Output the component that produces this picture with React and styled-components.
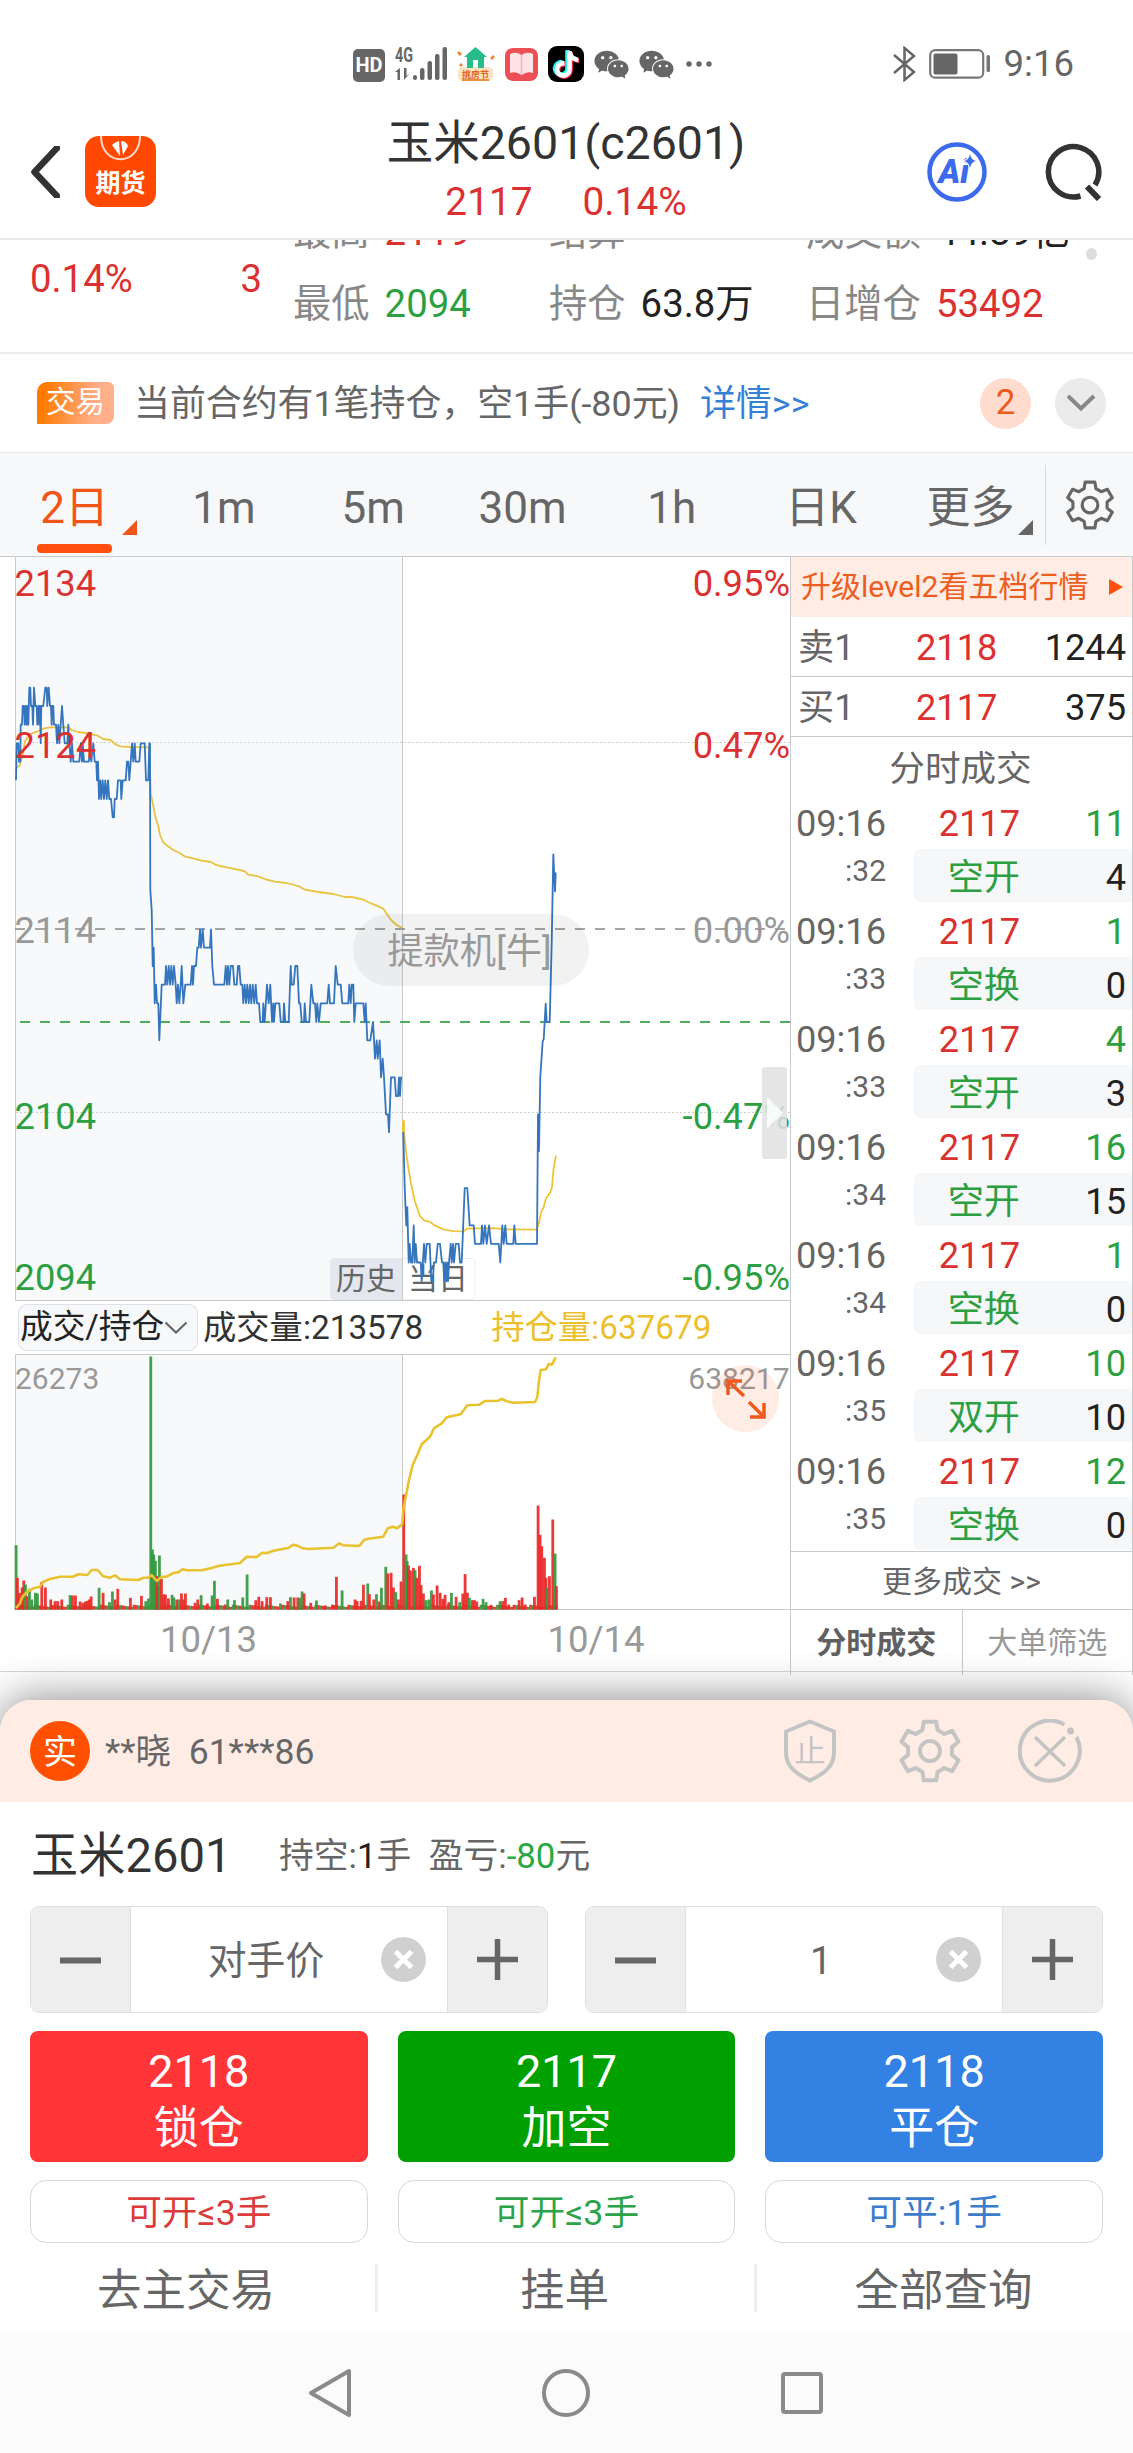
import React from 'react'
import styled, { createGlobalStyle } from 'styled-components'
import { FaTiktok } from 'react-icons/fa'
import { AiFillWechat } from 'react-icons/ai'

const RED = '#db3131'
const GREEN = '#2d9f43'
const ORANGE = '#ff5010'
const LINE = '#c9cacc'
const CHART_FONT = 'Roboto, "Noto Sans CJK SC", sans-serif'

const GlobalStyle = createGlobalStyle`
  * { box-sizing: border-box; }
  body {
    margin: 0;
    background: #fff;
    font-family: Roboto, "Noto Sans CJK SC", sans-serif;
    line-height: 1.2;
    color: #666;
  }
  svg { display: block; flex: none; }
`

const Page = styled.div`
  width: 1133px;
  height: 2453px;
  overflow: hidden;
  display: flex;
  flex-direction: column;
  background: #fff;
`

/* ---------- status bar ---------- */

const StatusBar = styled.div`
  height: 96px;
  padding: 32px 59px 0 353px;
  display: flex;
  align-items: center;
  gap: 10px;
  color: #666;
`

const HdBadge = styled.span`
  width: 32px;
  height: 33px;
  border-radius: 5px;
  background: #666;
  color: #fff;
  font-size: 20px;
  font-weight: 700;
  line-height: 33px;
  text-align: center;
  margin-top: 2px;
`

const TiktokBadge = styled.span`
  width: 36px;
  height: 36px;
  border-radius: 9px;
  background: #000;
  display: grid;
  place-items: center;
  svg { filter: drop-shadow(-1.5px -1px 0 #25f4ee) drop-shadow(1.5px 1px 0 #fe2c55); }
`

const Chats = styled.span`
  display: flex;
  gap: 6px;
  margin-left: -2px;
`

const StatusRight = styled.div`
  margin-left: auto;
  display: flex;
  align-items: center;
  gap: 13px;
  font-size: 36.5px;
  line-height: 44px;
`

/* ---------- header ---------- */

const Header = styled.header`
  height: 144px;
  padding: 9px 31px 0 30px;
  display: grid;
  grid-template-columns: 55px 1fr auto 1fr 57px;
  align-items: center;
  border-bottom: 2px solid #e9e9e9;
`

const AppLogo = styled.div`
  width: 71px;
  height: 71px;
`

const TitleBox = styled.div`
  text-align: center;
  padding: 3px 0 0 2px;
`

const Title = styled.div`
  font-size: 46.5px;
  line-height: 58px;
  color: #333;
`

const SubTitle = styled.div`
  font-size: 38.8px;
  line-height: 60px;
  color: ${RED};
  display: flex;
  justify-content: center;
  gap: 50px;
`

const HeaderRight = styled.div`
  display: flex;
  justify-content: flex-end;
  padding-right: 58px;
`

/* ---------- quote summary ---------- */

const Quote = styled.section`
  height: 112px;
  overflow: hidden;
  display: flex;
  font-size: 38.3px;
  position: relative;
`

const QuoteLeft = styled.div`
  width: 293px;
  padding: 14px 31px 0 30px;
  display: flex;
  justify-content: space-between;
  line-height: 50px;
  color: ${RED};
`

const QuoteGrid = styled.div`
  margin-top: -44px;
  display: grid;
  grid-template-columns: 256px 257px 300px;
  grid-template-rows: 72px 72px;
  line-height: 72px;
`

const QuoteItem = styled.div`
  display: flex;
  gap: 15px;
  color: #888;
  white-space: nowrap;
`

const QuoteValue = styled.span`
  color: ${p => p.$color};
`

const PageDot = styled.i`
  position: absolute;
  right: 36px;
  top: 8px;
  width: 11px;
  height: 12px;
  border-radius: 50%;
  background: #ddd;
`

/* ---------- position notice ---------- */

const Notice = styled.section`
  height: 101px;
  padding: 0 27px 0 37px;
  display: flex;
  align-items: center;
  border-top: 2px solid #ececec;
  border-bottom: 1px solid #e9e9e9;
  font-size: 35.9px;
  line-height: 50px;
`

const NoticeText = styled.span`
  padding-top: 2px;
`

const TradeTag = styled.span`
  width: 77px;
  height: 42px;
  border-radius: 10px 6px 8px 0;
  background: linear-gradient(100deg, #ff7a00 10%, #ffae8a 75%);
  color: #fff;
  font-size: 29.5px;
  line-height: 41px;
  text-align: center;
  margin-right: 20px;
`

const Detail = styled.a`
  color: #3480d8;
  margin-left: 20px;
  padding-top: 2px;
`

const RoundBadge = styled.span`
  width: 51px;
  height: 51px;
  border-radius: 50%;
  display: grid;
  place-items: center;
  margin-left: ${p => p.$push || '24px'};
  background: ${p => p.$bg};
  color: #ee5a1c;
  font-size: 35px;
`

/* ---------- period tabs ---------- */

const TabBar = styled.nav`
  height: 104px;
  display: flex;
  background: #f7f8fa;
  border-bottom: 1.5px solid ${LINE};
`

const Tab = styled.div`
  width: 149.3px;
  display: flex;
  flex-direction: column;
  align-items: center;
  padding-top: 29px;
  position: relative;
  font-size: 44px;
  line-height: 52px;
  color: ${p => (p.$active ? '#f0561a' : '#666')};
  &::before {
    content: "";
    display: ${p => (p.$active ? 'block' : 'none')};
    order: 2;
    width: 75px;
    height: 9px;
    margin-top: 10px;
    border-radius: 4px;
    background: ${ORANGE};
  }
`

const TabCorner = styled.i`
  position: absolute;
  right: 12px;
  top: 67px;
  border-bottom: 15px solid currentColor;
  border-left: 15px solid transparent;
`

const TabSettings = styled.div`
  height: 80px;
  margin-top: 12px;
  flex: 1;
  border-left: 1px solid #d8d8d8;
  display: grid;
  place-items: center;
`

/* ---------- chart ---------- */

const Market = styled.main`
  height: 1115px;
  display: grid;
  grid-template-columns: 790px 343px;
  border-bottom: 1.5px solid #d6d6d6;
`

const ChartColumn = styled.div`
  position: relative;
`

const InfoBar = styled.div`
  height: 53px;
  display: flex;
  align-items: center;
  padding-left: 18px;
  font-size: 33.3px;
  color: #333;
`

const Select = styled.div`
  width: 180px;
  height: 47px;
  margin-right: 5px;
  padding-left: 1px;
  display: flex;
  align-items: center;
  border: 1px solid #dfe1e6;
  border-radius: 9px;
  background: #f7f8fa;
  color: #222;
  font-size: 32.7px;
`

const OpenInterest = styled.span`
  color: #ecc02c;
  margin-left: 68px;
`

const Dates = styled.div`
  margin-left: 15px;
  display: grid;
  grid-template-columns: 387px 388px;
  text-align: center;
  font-size: 36.5px;
  line-height: 60px;
  color: #999;
`

const Watermark = styled.div`
  position: absolute;
  left: 353px;
  top: 357px;
  width: 236px;
  height: 72px;
  padding-right: 3px;
  border-radius: 36px;
  background: rgba(0, 0, 0, 0.05);
  color: #999;
  font-size: 36.3px;
  line-height: 75px;
  text-align: center;
`

const Handle = styled.div`
  position: absolute;
  left: 762px;
  top: 510px;
  width: 25px;
  height: 92px;
  border-radius: 3px;
  background: rgba(224, 224, 224, 0.85);
  display: grid;
  place-items: center;
`

const Expand = styled.div`
  position: absolute;
  left: 712px;
  top: 808px;
  width: 67px;
  height: 67px;
  border-radius: 50%;
  background: rgba(255, 80, 10, 0.11);
  display: grid;
  place-items: center;
`

/* ---------- order book ---------- */

const Side = styled.aside`
  border-left: 1px solid ${LINE};
  border-right: 1.5px solid ${LINE};
  font-size: 36.2px;
  display: flex;
  flex-direction: column;
`

const Upgrade = styled.div`
  height: 60px;
  padding: 0 9px 0 10px;
  display: flex;
  align-items: center;
  justify-content: space-between;
  background: #ffece4;
  color: #ee5d20;
  font-size: 30px;
`

const BookRow = styled.div`
  height: 60px;
  padding: 2px 6px 0 7px;
  display: grid;
  grid-template-columns: 118px 1fr auto;
  align-items: center;
  border-bottom: 1px solid ${LINE};
`

const Num = styled.span`
  color: ${p => p.$color || '#222'};
  text-align: right;
`

const LeftNum = styled(Num)`
  text-align: left;
`

const SideTitle = styled.div`
  height: 58px;
  line-height: 64px;
  padding-right: 2px;
  text-align: center;
  font-size: 35.6px;
`

const Trade = styled.div`
  height: 108px;
  display: grid;
  grid-template-columns: 95px 28px 1fr;
  grid-template-rows: 54px 54px;
`

const Time = styled.span`
  text-align: right;
  line-height: 58px;
`

const Second = styled.span`
  text-align: right;
  font-size: 30px;
  line-height: 43px;
`

const TradeCells = styled.div`
  grid-column: 3;
  height: 53px;
  padding-right: 6px;
  display: grid;
  grid-template-columns: 106px 1fr;
  line-height: 58px;
  border-radius: 6px 0 0 6px;
  background: ${p => (p.$shade ? '#f6f7f9' : 'transparent')};
`

const More = styled.div`
  height: 59px;
  line-height: 60px;
  border-top: 1px solid ${LINE};
  border-bottom: 1px solid ${LINE};
  text-align: center;
  font-size: 30px;
`

const SideTabs = styled.div`
  flex: 1;
  display: grid;
  grid-template-columns: 1fr 1fr;
`

const SideTab = styled.div`
  text-align: center;
  font-size: 30px;
  line-height: 65px;
  color: ${p => (p.$active ? '#606060' : '#999')};
  font-weight: ${p => (p.$active ? 700 : 400)};
  & + & { border-left: 1px solid ${LINE}; }
`

/* ---------- order sheet ---------- */

const Sheet = styled.section`
  margin-top: 28px;
  height: 633px;
  border-radius: 32px 32px 0 0;
  overflow: visible;
  background: #fff;
  position: relative;
  box-shadow: 0 -2px 44px rgba(0, 0, 0, 0.45);
`

const Account = styled.div`
  height: 102px;
  padding: 0 51px 0 30px;
  border-radius: 32px 32px 0 0;
  display: flex;
  align-items: center;
  background: #ffece5;
  font-size: 35.5px;
`

const AccountName = styled.span`
  padding-top: 3px;
`

const AccountBadge = styled.span`
  width: 60px;
  height: 60px;
  border-radius: 50%;
  background: #ff5000;
  color: #fff;
  font-size: 34px;
  line-height: 62px;
  text-align: center;
  margin-right: 15px;
`

const AccountIcons = styled.div`
  margin-left: auto;
  display: flex;
  align-items: center;
  gap: 56px;
`

const Contract = styled.div`
  height: 104px;
  padding: 5px 31px 0;
  display: flex;
  align-items: center;
  font-size: 34.8px;
`

const ContractName = styled.span`
  font-size: 47.2px;
  color: #333;
  width: 248px;
`

const Colored = styled.span`
  color: ${p => p.$color};
`

const Steppers = styled.div`
  display: flex;
  gap: 37px;
  padding: 0 30px;
`

const Stepper = styled.div`
  flex: 1;
  height: 107px;
  display: grid;
  grid-template-columns: 99px 1fr 99px;
  border: 1.5px solid #dedede;
  border-radius: 9px;
  overflow: hidden;
`

const StepButton = styled.div`
  background: #eee;
  display: grid;
  place-items: center;
`

const StepValue = styled.div`
  display: flex;
  align-items: center;
  padding: 0 21px 0 20px;
  border: solid #e0e0e0;
  border-width: 0 1px;
  font-size: 38.8px;
`

const StepText = styled.span`
  flex: 1;
  text-align: center;
  padding-top: 4px;
`

const Columns = styled.div`
  display: grid;
  grid-template-columns: repeat(3, 1fr);
  gap: 30px;
  padding: 0 30px;
  margin-top: ${p => p.$top};
`

const Action = styled.div`
  height: 131px;
  border-radius: 8px;
  padding-top: 12px;
  background: ${p => p.$bg};
  color: #fff;
  text-align: center;
  font-size: 45px;
  line-height: 57px;
`

const Limit = styled.div`
  height: 63px;
  border: 1.5px solid #d9d9d9;
  border-radius: 16px;
  color: ${p => p.$color};
  text-align: center;
  font-size: 35.7px;
  line-height: 65px;
`

const Links = styled.div`
  margin-top: 21px;
  display: grid;
  grid-template-columns: 375px 379px 379px;
`

const LinkItem = styled.div`
  height: 48px;
  line-height: 55px;
  text-align: center;
  font-size: 44.5px;
  padding-right: 3px;
  & + & { border-left: 3px solid #eee; }
`

const NavBar = styled.div`
  flex: 1;
  position: relative;
  display: flex;
  align-items: center;
  gap: 180px;
  padding-left: 298px;
  background: #fbfbfb;
`

/* ---------- data ---------- */

const periods = ['2日', '1m', '5m', '30m', '1h', '日K', '更多']

const trades = [
  ['32', 11, '空开', 4],
  ['33', 1, '空换', 0],
  ['33', 4, '空开', 3],
  ['34', 16, '空开', 15],
  ['34', 1, '空换', 0],
  ['35', 10, '双开', 10],
  ['35', 12, '空换', 0],
]

// price traces: x in thirds of a pixel, then the y of the tick
const priceMorning = '48,721 50,610 55,610 57,665 61,665 62,554 66,554 68,498 72,498 74,554 77,498 80,554 82,498 85,554 88,443 91,443 93,498 97,498 99,554 102,443 106,498 110,498 112,554 116,498 118,554 120,498 122,610 124,498 130,498 136,443 140,443 142,498 146,443 150,498 153,498 155,554 157,498 160,498 162,554 168,554 171,610 175,554 178,610 182,554 186,498 190,554 194,610 202,610 205,554 208,610 212,665 216,610 220,665 238,665 242,610 246,665 248,610 252,665 266,665 270,640 274,665 280,610 284,665 289,665 291,721 294,665 297,777 301,721 304,777 308,721 312,777 316,721 320,777 324,721 328,777 333,777 338,832 342,832 344,777 350,777 354,721 362,721 364,777 368,721 377,721 381,665 385,665 388,721 392,665 396,610 400,665 404,610 407,665 418,665 422,610 434,610 438,721 445,721 448,610 450,610 451,1050 455,1110'
const priceAfternoon = '455,90 458,258 461,203 464,370 468,314 471,370 475,370 478,481 485,314 495,314 498,258 502,314 506,258 510,314 514,258 518,314 522,258 527,314 530,370 534,314 538,370 542,314 545,258 550,370 556,314 572,314 576,258 579,314 582,258 588,258 592,203 596,203 600,148 603,203 608,148 612,203 630,203 633,148 637,258 642,314 673,314 677,258 681,314 684,258 688,314 692,258 699,258 703,314 710,314 714,258 718,258 722,314 727,314 730,370 734,314 738,370 742,314 746,370 750,314 754,370 758,314 763,370 767,314 771,370 777,370 781,426 788,426 790,370 794,426 801,314 806,370 811,314 816,426 820,370 822,426 826,370 838,370 842,426 850,426 852,370 856,426 866,426 872,258 875,314 881,314 886,258 892,258 897,370 901,370 905,426 912,426 914,370 918,426 928,426 934,314 940,370 945,370 949,426 952,370 957,426 962,370 982,370 986,314 990,370 1002,370 1007,258 1013,314 1022,314 1027,370 1045,370 1048,314 1052,370 1055,314 1060,314 1063,426 1067,370 1090,370 1094,426 1097,370 1102,481 1111,481 1119,426 1125,536 1130,481 1133,536 1139,481 1143,592 1148,536 1152,592 1158,703 1164,703 1167,757 1173,592 1184,592 1188,648 1194,648 1197,592 1200,648 1203,592 1206,592'
const priceToday = '70,930 74,1085 79,1191 82,1140 86,1295 89,1243 93,1295 97,1295 101,1191 104,1295 107,1243 111,1295 122,1295 125,1347 132,1243 136,1295 140,1243 149,1243 154,1347 158,1347 162,1295 168,1295 173,1243 180,1243 186,1295 190,1295 193,1347 196,1295 199,1347 202,1295 204,1347 207,1295 212,1243 215,1295 219,1243 222,1295 227,1243 236,1243 240,1295 245,1295 254,1087 262,1087 269,1191 281,1191 285,1243 303,1243 306,1191 310,1243 315,1191 320,1243 327,1191 333,1243 356,1243 361,1295 367,1191 371,1243 376,1191 380,1243 400,1243 403,1191 407,1243 471,1243 474,880 477,983 481,775 488,675 491,670 497,570 500,622 509,622 515,400 520,152 525,256 527,205 529,205'
const averageHistory = '51,682 58,678 66,655 70,640 74,605 84,590 95,580 110,575 130,566 150,562 205,562 215,570 235,576 265,580 290,586 310,597 332,600 345,612 360,619 390,621 448,622 452,760 458,790 466,830 475,858 480,885 490,907 500,916 520,930 540,940 556,950 580,955 605,962 633,966 648,975 680,982 710,988 733,993 745,1004 770,1008 800,1019 825,1025 860,1029 895,1038 915,1049 955,1056 1000,1062 1035,1071 1055,1071 1090,1079 1115,1091 1150,1106 1160,1122 1175,1142 1190,1155 1206,1164'
const averageToday = '68,930 70,897 72,900 72,930 80,1000 92,1070 105,1125 120,1165 132,1177 150,1181 165,1192 190,1202 220,1207 250,1208 262,1200 340,1199 380,1202 470,1203 478,1180 484,1152 490,1143 498,1115 510,1100 516,1085 520,1040 524,1015 528,996'
const openInterest = '48,985 60,970 65,955 72,945 85,933 100,925 120,920 130,905 150,897 180,890 218,890 235,883 262,885 275,870 293,870 310,889 330,893 345,886 360,898 415,900 430,893 445,893 455,885 470,903 485,890 500,890 518,880 535,877 548,868 560,871 605,871 635,864 655,858 720,849 740,830 770,831 787,818 800,820 820,812 865,804 880,794 895,798 905,804 925,807 1000,803 1018,790 1030,796 1078,798 1092,780 1105,776 1150,770 1163,745 1178,740 1192,745 1207,732 1210,690 1225,610 1238,555 1255,518 1265,493 1290,470 1302,445 1325,430 1340,412 1360,407 1382,403 1402,376 1438,374 1455,363 1495,362 1505,357 1520,364 1540,368 1605,366 1612,352 1616,310 1622,270 1638,268 1646,252 1656,254 1667,232'

const volumes = 'g48:193 r52:95 r58:50 r66:66 r71:87 g76:75 r82:40 g88:62 g95:30 g106:50 g112:48 r125:83 r136:66 r152:30 r165:25 r173:25 r185:30 g210:43 r217:42 r226:42 r240:24 r248:20 r256:24 r262:26 r268:30 r273:39 g297:65 r309:50 g328:22 g337:54 r345:30 r353:62 r391:35 r424:41 g437:25 g445:33 g457:180 g461:165 g466:146 r470:100 r474:70 g478:162 r484:92 g452:759 r490:45 r496:45 r505:33 g516:44 g521:36 r530:30 g538:30 r544:48 r550:30 r556:48 r585:20 r593:30 g603:43 r622:18 g636:42 g643:86 r652:32 r675:15 g683:30 g703:28 g728:36 g741:105 r767:28 r776:38 r786:25 r800:37 r811:37 g841:18 r863:25 g871:37 r882:36 r893:36 g899:35 g906:54 r912:48 r932:20 g949:27 r975:12 r998:14 r1009:98 g1026:57 r1065:30 r1071:25 r1083:26 r1090:74 g1103:78 r1108:46 r1121:30 g1129:46 r1137:24 g1144:65 g1157:128 r1163:108 r1173:110 r1180:66 g1187:52 r1195:30 r1203:84 r1211:345 g1218:165 g1221:145 r1225:132 r1231:117 r1240:125 g1245:118 r1250:95 r1258:131 r1263:73 r1270:48 g1277:28 g1286:30 g1294:57 r1300:45 r1311:72 r1320:50 r1328:32 r1335:44 r1346:22 g1354:50 r1368:38 g1379:22 r1388:48 r1395:106 r1402:50 g1408:35 r1417:28 r1423:28 r1430:24 g1449:32 g1458:22 r1473:14 g1500:25 r1508:25 r1516:35 r1526:15 r1557:28 r1566:36 r1575:15 r1603:38 r1614:312 r1620:224 r1625:190 r1633:155 r1638:95 g1641:65 r1648:100 r1658:270 g1665:168 r1669:70'
  .split(' ')
  .map(v => {
    const [x, h] = v.slice(1).split(':')
    return { up: v[0] === 'r', x: x / 3, h: h / 3 }
  })

// quiet minutes between the spikes
const quiet = Array.from({ length: 230 }, (_, i) => ({
  up: (i * 7) % 5 < 3,
  x: 16 + i * 2.36,
  h: 2.6 + ((i * 13) % 7) * 0.35,
}))

const points = (data, x0, y0, ky = 3) =>
  data
    .split(' ')
    .map(p => {
      const [x, y] = p.split(',')
      return `${(x0 + x / 3).toFixed(1)},${(y0 + y / ky).toFixed(1)}`
    })
    .join(' ')

const gearPath = (c, r) => {
  const at = (deg, k) => {
    const a = (deg * Math.PI) / 180
    return `${(c + Math.cos(a) * r * k).toFixed(1)} ${(c + Math.sin(a) * r * k).toFixed(1)}`
  }
  let d = ''
  for (let i = 0; i < 6; i++) {
    const a = i * 60 - 90
    d += `${i ? 'L' : 'M'}${at(a - 20, 0.74)} L${at(a - 12, 1)} L${at(a + 12, 1)} L${at(a + 20, 0.74)} `
  }
  return d + 'Z'
}

/* ---------- icons ---------- */

const Gear = ({ size, color, width }) => (
  <svg width={size} height={size} viewBox="0 0 64 64" fill="none" stroke={color} strokeWidth={width} strokeLinejoin="round">
    <path d={gearPath(32, 30)} />
    <circle cx="32" cy="32" r="10" />
  </svg>
)

const Signal = () => (
  <svg width="52" height="36" viewBox="0 0 52 36" fill="#666">
    <text x="0" y="16" fontSize="20" fontWeight="700" textLength="18" lengthAdjust="spacingAndGlyphs" fontFamily="Roboto, sans-serif">4G</text>
    <path d="M0 26 L5 22 V34 H2.500 V26Z M9 22 H11.500 V30 L15 27 L9 34Z" />
    <rect x="18" y="29" width="4" height="5" rx="2" />
    <rect x="25" y="22" width="4.500" height="12" rx="2" />
    <rect x="32.500" y="15" width="4.500" height="19" rx="2" />
    <rect x="40" y="8" width="4.500" height="26" rx="2" />
    <rect x="47.500" y="1" width="4.500" height="33" rx="2" />
  </svg>
)

const HouseApp = () => (
  <svg width="38" height="38" viewBox="0 0 38 38">
    <rect x="1" y="22" width="35" height="14" rx="5" fill="#fbe3c2" />
    <path d="M5 35 H32" stroke="#e9903c" strokeWidth="2" />
    <path d="M18.500 2 L30 12 H27 V23 H21 V15 H16 V23 H10 V12 H7Z" fill="#27bd8a" />
    <path d="M1 7 L4 10 M34 14 L37 11 M3 19 L5 21" stroke="#ee8a33" strokeWidth="3" />
    <text x="18.500" y="33" textAnchor="middle" fontSize="9" fontWeight="700" fill="#e2641e" fontFamily={CHART_FONT}>挑房节</text>
  </svg>
)

const BookApp = () => (
  <svg width="33" height="33" viewBox="0 0 33 33">
    <rect width="33" height="33" rx="8" fill="#ec4f55" />
    <path d="M5 6 Q11 3 16.500 7 Q22 3 28 6 V25 Q22 23 16.500 27 Q11 23 5 25Z" fill="#ffe3e6" />
    <path d="M16.500 7 V27" stroke="#f5b1b8" strokeWidth="1.500" />
  </svg>
)

const Battery = () => (
  <svg width="62" height="30" viewBox="0 0 62 30">
    <rect x="1.200" y="1.200" width="53" height="27.500" rx="5" fill="none" stroke="#777" strokeWidth="2.200" />
    <rect x="4.500" y="4.500" width="24" height="21" rx="2" fill="#666" />
    <rect x="57.500" y="6" width="3.500" height="17" rx="1.500" fill="#777" />
  </svg>
)

const PriceChart = () => (
  <svg width="790" height="744" viewBox="0 0 790 744" fontFamily={CHART_FONT} fontSize="36.300">
    <rect x="15.500" y="0" width="387" height="743" fill="#f7f9fa" />
    <path d="M15.500 0 V743.500 H790 M402.500 0 V743" fill="none" stroke={LINE} />
    <path d="M16 185.500 H790 M16 555.500 H790" stroke="#cfcfcf" strokeDasharray="2 2" />
    <path d="M335 701 H402 V743 H335 Q330 743 330 738 V706 Q330 701 335 701Z" fill="#e4e7ee" />
    <path d="M403 701.500 H470 Q475 701.500 475 706 V738 Q475 742.500 470 742.500 H403" fill="#fff" stroke="#ececec" />
    <g fontSize="30" fill="#666">
      <text x="336" y="732">历史</text>
      <text x="408" y="732">当日</text>
    </g>
    <path d="M15 372 H790" stroke="#888" strokeWidth="1.700" strokeDasharray="10 10" />
    <path d="M20 465 H790" stroke="#4fae58" strokeWidth="2" strokeDasharray="10 10" />
    <g fill="none" strokeWidth="1.800" strokeLinejoin="round">
      <polyline points={points(averageHistory, 0, -17)} stroke="#e8c440" />
      <polyline points={points(averageToday, 380, 243, 2.8)} stroke="#ecc437" />
      <polyline points={points(priceMorning, 0, -17)} stroke="#3575bd" />
      <polyline points={points(priceAfternoon, 0, 323)} stroke="#3575bd" />
      <polyline points={points(priceToday, 380, 243, 2.8)} stroke="#3575bd" />
    </g>
    <g fill={RED}>
      <text x="14.500" y="39">2134</text>
      <text x="14.500" y="201">2124</text>
      <text x="790" y="39" textAnchor="end">0.95%</text>
      <text x="790" y="201" textAnchor="end">0.47%</text>
    </g>
    <g fill={GREEN}>
      <text x="14.500" y="572">2104</text>
      <text x="14.500" y="733">2094</text>
      <text x="790" y="572" textAnchor="end">-0.47%</text>
      <text x="790" y="733" textAnchor="end">-0.95%</text>
    </g>
    <g fill="#999">
      <text x="14.500" y="386">2114</text>
      <text x="790" y="386" textAnchor="end">0.00%</text>
    </g>
  </svg>
)

const VolumeChart = () => (
  <svg width="790" height="256" viewBox="0 0 790 256" fontFamily={CHART_FONT} fontSize="30" fill="#999">
    <rect x="15.500" y="0.500" width="387" height="255" fill="#f7f9fa" />
    <path d="M15.500 255.500 V0.500 H790 M402.500 0 V255 M15 255.500 H790" fill="none" stroke={LINE} />
    <text x="15" y="35">26273</text>
    <text x="789.500" y="35" textAnchor="end">638217</text>
    {[...quiet, ...volumes].map((v, i) => (
      <rect key={i} x={v.x - 1.3} y={255.5 - v.h} width="2.800" height={v.h} fill={v.up ? '#e92a28' : '#35993f'} fillOpacity="0.93" />
    ))}
    <polyline points={points(openInterest, 0, -74)} fill="none" stroke="#e9c22f" strokeWidth="2.600" strokeLinejoin="round" />
  </svg>
)

/* ---------- page ---------- */

const Minus = () => (
  <svg width="41" height="41"><path d="M0 21.500 H41" stroke="#666" strokeWidth="6" /></svg>
)

const Plus = () => (
  <svg width="41" height="41"><path d="M0 20.500 H41 M20.500 0 V41" stroke="#666" strokeWidth="5.500" /></svg>
)

const Clear = () => (
  <svg width="45" height="45" viewBox="0 0 45 45">
    <circle cx="22.500" cy="22.500" r="22.500" fill="#d0d0d0" />
    <path d="M14.500 14.500 L30.500 30.500 M30.500 14.500 L14.500 30.500" stroke="#fff" strokeWidth="5" />
  </svg>
)

function NumberStepper({ value }) {
  return (
    <Stepper>
      <StepButton><Minus /></StepButton>
      <StepValue>
        <StepText>{value}</StepText>
        <Clear />
      </StepValue>
      <StepButton><Plus /></StepButton>
    </Stepper>
  )
}

function TopStatus() {
  return (
    <StatusBar>
      <HdBadge>HD</HdBadge>
      <Signal />
      <HouseApp />
      <BookApp />
      <TiktokBadge><FaTiktok size={27} color="#fff" /></TiktokBadge>
      <Chats>
        <AiFillWechat size={39} />
        <AiFillWechat size={39} />
      </Chats>
      <svg width="26" height="6" viewBox="0 0 26 6" fill="#666">
        <circle cx="3" cy="3" r="2.700" />
        <circle cx="13" cy="3" r="2.700" />
        <circle cx="23" cy="3" r="2.700" />
      </svg>
      <StatusRight>
        <svg width="23" height="36" viewBox="0 0 23 36" fill="none" stroke="#666" strokeWidth="2.500">
          <path d="M1 9 L21 26 L11.500 34 V2 L21 10 L1 27" />
        </svg>
        <Battery />
        <span>9:16</span>
      </StatusRight>
    </StatusBar>
  )
}

function TopHeader() {
  return (
    <Header>
      <svg width="30" height="52" viewBox="0 0 30 52" fill="none" stroke="#333" strokeWidth="6.500">
        <path d="M27 2 L4.500 26 L27 50" strokeLinecap="round" strokeLinejoin="round" />
      </svg>
      <AppLogo>
        <svg width="71" height="71" viewBox="0 0 71 71">
          <rect width="71" height="71" rx="14" fill="#ff4800" />
          <path d="M16 0 C16 31 55 31 55 0" fill="none" stroke="#fff" strokeOpacity="0.800" strokeWidth="2" />
          <path d="M27 9 L35 20 L34 5 Q30 6 27 9Z M36 5 L38 19 L43 10 Q41 5 36 5Z" fill="#fff" />
          <text x="35.500" y="56" textAnchor="middle" fontSize="25" fontWeight="700" fill="#fff" fontFamily={CHART_FONT}>期货</text>
        </svg>
      </AppLogo>
      <TitleBox>
        <Title>玉米2601(c2601)</Title>
        <SubTitle><span>2117</span><span>0.14%</span></SubTitle>
      </TitleBox>
      <HeaderRight>
        <svg width="60" height="60" viewBox="0 0 60 60">
          <circle cx="30" cy="30" r="27.500" fill="none" stroke="#3d69ec" strokeWidth="4.500" />
          <text x="11.500" y="41" fontSize="33" fontWeight="900" fontStyle="italic" fill="#3d69ec" fontFamily="Roboto, sans-serif">Ai</text>
          <path d="M43 12 Q44 18 49 19 Q44 20 43 26 Q42 20 37 19 Q42 18 43 12Z" fill="#3d69ec" stroke="#fff" strokeWidth="2" paintOrder="stroke" />
        </svg>
      </HeaderRight>
      <svg width="58" height="58" viewBox="0 0 58 58" fill="none" stroke="#333" strokeWidth="5.500">
        <path d="M35.500 53 A25.200 25.200 0 1 1 50 42" />
        <path d="M42 43.500 L54 56" strokeWidth="6" />
      </svg>
    </Header>
  )
}

function QuoteSummary() {
  return (
    <Quote>
      <QuoteLeft><span>0.14%</span><span>3</span></QuoteLeft>
      <QuoteGrid>
        <QuoteItem>最高<QuoteValue $color={RED}>2119</QuoteValue></QuoteItem>
        <QuoteItem>结算</QuoteItem>
        <QuoteItem>成交额<QuoteValue $color="#222">44.89亿</QuoteValue></QuoteItem>
        <QuoteItem>最低<QuoteValue $color={GREEN}>2094</QuoteValue></QuoteItem>
        <QuoteItem>持仓<QuoteValue $color="#222">63.8万</QuoteValue></QuoteItem>
        <QuoteItem>日增仓<QuoteValue $color={RED}>53492</QuoteValue></QuoteItem>
      </QuoteGrid>
      <PageDot />
    </Quote>
  )
}

function OrderBook() {
  return (
    <Side>
      <Upgrade>
        升级level2看五档行情
        <svg width="14" height="18"><path d="M0 1 L14 9 L0 17Z" fill={ORANGE} /></svg>
      </Upgrade>
      <BookRow><span>卖1</span><LeftNum $color={RED}>2118</LeftNum><Num>1244</Num></BookRow>
      <BookRow><span>买1</span><LeftNum $color={RED}>2117</LeftNum><Num>375</Num></BookRow>
      <SideTitle>分时成交</SideTitle>
      {trades.map(([second, volume, kind, change], i) => (
        <Trade key={i}>
          <Time>09:16</Time>
          <TradeCells>
            <Num $color={RED}>2117</Num>
            <Num $color={GREEN}>{volume}</Num>
          </TradeCells>
          <Second>:{second}</Second>
          <TradeCells $shade>
            <Num $color={GREEN}>{kind}</Num>
            <Num>{change}</Num>
          </TradeCells>
        </Trade>
      ))}
      <More>更多成交 &gt;&gt;</More>
      <SideTabs>
        <SideTab $active>分时成交</SideTab>
        <SideTab>大单筛选</SideTab>
      </SideTabs>
    </Side>
  )
}

function OrderSheet() {
  return (
    <Sheet>
      <Account>
        <AccountBadge>实</AccountBadge>
        <AccountName>**晓&nbsp; 61***86</AccountName>
        <AccountIcons>
          <svg width="64" height="64" viewBox="0 0 64 64" fill="none" stroke="#c4c4c4" strokeWidth="4" strokeLinejoin="round">
            <path d="M32 2.500 L56 12.500 V34 C56 48 45 55 32 61.500 C19 55 8 48 8 34 V12.500Z" />
            <text x="32" y="43" textAnchor="middle" fontSize="31" fill="#c4c4c4" stroke="none" fontFamily={CHART_FONT}>止</text>
          </svg>
          <Gear size={64} color="#c4c4c4" width={4} />
          <svg width="64" height="64" viewBox="0 0 64 64" fill="none" stroke="#c4c4c4" strokeWidth="4">
            <path d="M46.500 5.500 A30 30 0 1 0 58.500 18" />
            <path d="M17 18 L47 47 M47 18 L17 47" strokeWidth="3.500" />
            <circle cx="52.500" cy="12" r="3.500" fill="#c4c4c4" stroke="none" />
          </svg>
        </AccountIcons>
      </Account>
      <Contract>
        <ContractName>玉米2601</ContractName>
        <span>
          持空:<Colored $color="#222">1</Colored>手&nbsp; 盈亏:<Colored $color="#2aa846">-80</Colored>元
        </span>
      </Contract>
      <Steppers>
        <NumberStepper value="对手价" />
        <NumberStepper value="1" />
      </Steppers>
      <Columns $top="18px">
        <Action $bg="#ff3538">2118<br />锁仓</Action>
        <Action $bg="#00a000">2117<br />加空</Action>
        <Action $bg="#3381e3">2118<br />平仓</Action>
      </Columns>
      <Columns $top="18px">
        <Limit $color="#dc3b3b">可开≤3手</Limit>
        <Limit $color="#2da349">可开≤3手</Limit>
        <Limit $color="#3b7ccb">可平:1手</Limit>
      </Columns>
      <Links>
        <LinkItem>去主交易</LinkItem>
        <LinkItem>挂单</LinkItem>
        <LinkItem>全部查询</LinkItem>
      </Links>
    </Sheet>
  )
}

function App() {
  return (
    <Page>
      <GlobalStyle />
      <TopStatus />
      <TopHeader />
      <QuoteSummary />
      <Notice>
        <TradeTag>交易</TradeTag>
        <NoticeText>当前合约有1笔持仓，空1手(-80元)</NoticeText>
        <Detail>详情&gt;&gt;</Detail>
        <RoundBadge $bg="#ffdccd" $push="auto">2</RoundBadge>
        <RoundBadge $bg="#ebebeb">
          <svg width="30" height="18"><path d="M2 2 L15 14.500 L28 2" fill="none" stroke="#888" strokeWidth="4" /></svg>
        </RoundBadge>
      </Notice>
      <TabBar>
        {periods.map((name, i) => (
          <Tab key={name} $active={i === 0}>
            {name}
            {(i === 0 || i === periods.length - 1) && <TabCorner />}
          </Tab>
        ))}
        <TabSettings><Gear size={50} color="#666" width={4} /></TabSettings>
      </TabBar>
      <Market>
        <ChartColumn>
          <PriceChart />
          <InfoBar>
            <Select>
              成交/持仓
              <svg width="24" height="14"><path d="M1.500 1.500 L12 11.500 L22.500 1.500" fill="none" stroke="#666" strokeWidth="2.200" /></svg>
            </Select>
            <span>成交量:213578</span>
            <OpenInterest>持仓量:637679</OpenInterest>
          </InfoBar>
          <VolumeChart />
          <Dates><span>10/13</span><span>10/14</span></Dates>
          <Watermark>提款机[牛]</Watermark>
          <Handle>
            <svg width="16" height="32"><path d="M0 0 L16 16 L0 32Z" fill="#fff" fillOpacity="0.850" /></svg>
          </Handle>
          <Expand>
            <svg width="42" height="42" viewBox="0 0 42 42" fill="none" stroke="#ee5a1e" strokeWidth="3.500">
              <path d="M3 17 V3 H17 M3 3 L19 18 M24 24 L39 39 M39 25 V39 H25" />
            </svg>
          </Expand>
        </ChartColumn>
        <OrderBook />
      </Market>
      <OrderSheet />
      <NavBar>
        <svg width="64" height="50" viewBox="0 0 64 50" fill="none" stroke="#8a8a8a" strokeWidth="4" strokeLinejoin="round">
          <path d="M51 3 V47 L13 25Z" />
        </svg>
        <svg width="48" height="48" viewBox="0 0 48 48" fill="none" stroke="#8a8a8a" strokeWidth="4">
          <circle cx="24" cy="24" r="22" />
        </svg>
        <svg width="56" height="48" viewBox="-8 0 56 48" fill="none" stroke="#8a8a8a" strokeWidth="4">
          <rect x="5" y="5" width="38" height="38" rx="2" />
        </svg>
      </NavBar>
    </Page>
  )
}

export default App
